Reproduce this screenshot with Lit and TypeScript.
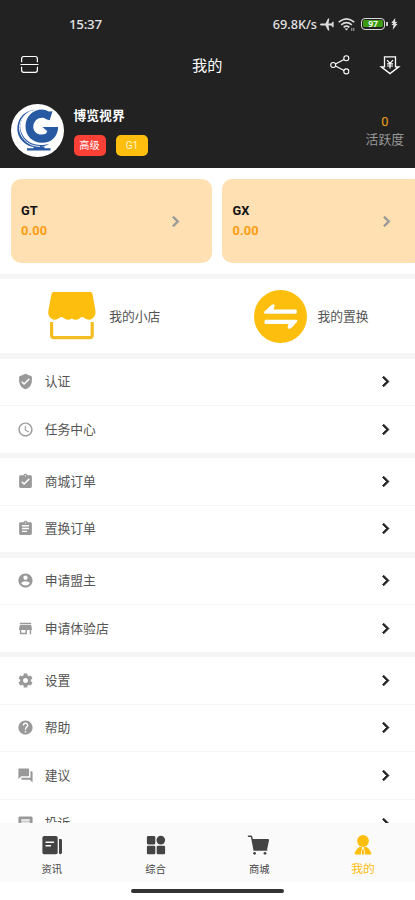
import { LitElement, html, svg, css } from "lit";
import { customElement, property } from "lit/decorators.js";

const materialPaths: Record<string, string> = {
  verified: "M12 1L3 5v6c0 5.55 3.84 10.74 9 12 5.16-1.26 9-6.45 9-12V5l-9-4zm-2 16l-4-4 1.41-1.41L10 14.17l6.59-6.59L18 9l-8 8z",
  clock: "M11.99 2C6.47 2 2 6.48 2 12s4.47 10 9.99 10C17.52 22 22 17.52 22 12S17.52 2 11.99 2zM12 20c-4.42 0-8-3.58-8-8s3.58-8 8-8 8 3.58 8 8-3.58 8-8 8zM12.5 7H11v6l5.25 3.15.75-1.23-4.5-2.67z",
  done: "M19 3h-4.18C14.4 1.84 13.3 1 12 1c-1.3 0-2.4.84-2.82 2H5c-1.1 0-2 .9-2 2v14c0 1.1.9 2 2 2h14c1.1 0 2-.9 2-2V5c0-1.1-.9-2-2-2zm-7 0c.55 0 1 .45 1 1s-.45 1-1 1-1-.45-1-1 .45-1 1-1zm-2 14l-4-4 1.41-1.41L10 14.17l6.59-6.59L18 9l-8 8z",
  order: "M19 3h-4.18C14.4 1.84 13.3 1 12 1c-1.3 0-2.4.84-2.82 2H5c-1.1 0-2 .9-2 2v14c0 1.1.9 2 2 2h14c1.1 0 2-.9 2-2V5c0-1.1-.9-2-2-2zm-7 0c.55 0 1 .45 1 1s-.45 1-1 1-1-.45-1-1 .45-1 1-1zm2 14H7v-2h7v2zm3-4H7v-2h10v2zm0-4H7V7h10v2z",
  account: "M12 2C6.48 2 2 6.48 2 12s4.48 10 10 10 10-4.48 10-10S17.52 2 12 2zm0 3c1.66 0 3 1.34 3 3s-1.34 3-3 3-3-1.34-3-3 1.34-3 3-3zm0 14.2c-2.5 0-4.71-1.28-6-3.22.03-1.99 4-3.08 6-3.08 1.99 0 5.97 1.09 6 3.08-1.29 1.94-3.5 3.22-6 3.22z",
  store: "M20 4H4v2h16V4zm1 10v-2l-1-5H4l-1 5v2h1v6h10v-6h4v6h2v-6h1zm-9 4H6v-4h6v4z",
  settings: "M19.43 12.98c.04-.32.07-.64.07-.98s-.03-.66-.07-.98l2.11-1.65c.19-.15.24-.42.12-.64l-2-3.46c-.12-.22-.39-.3-.61-.22l-2.49 1c-.52-.4-1.08-.73-1.69-.98l-.38-2.65C14.46 2.18 14.25 2 14 2h-4c-.25 0-.46.18-.49.42l-.38 2.65c-.61.25-1.17.59-1.69.98l-2.49-1c-.23-.09-.49 0-.61.22l-2 3.46c-.13.22-.07.49.12.64l2.11 1.65c-.04.32-.07.65-.07.98s.03.66.07.98l-2.11 1.65c-.19.15-.24.42-.12.64l2 3.46c.12.22.39.3.61.22l2.49-1c.52.4 1.08.73 1.69.98l.38 2.65c.03.24.24.42.49.42h4c.25 0 .46-.18.49-.42l.38-2.65c.61-.25 1.17-.59 1.69-.98l2.49 1c.23.09.49 0 .61-.22l2-3.46c.12-.22.07-.49-.12-.64l-2.11-1.65zM12 15.5c-1.93 0-3.5-1.57-3.5-3.5s1.57-3.5 3.5-3.5 3.5 1.57 3.5 3.5-1.57 3.5-3.5 3.5z",
  help: "M12 2C6.48 2 2 6.48 2 12s4.48 10 10 10 10-4.48 10-10S17.52 2 12 2zm1 17h-2v-2h2v2zm2.07-7.75l-.9.92C13.45 12.9 13 13.5 13 15h-2v-.5c0-1.1.45-2.1 1.17-2.83l1.24-1.26c.37-.36.59-.86.59-1.41 0-1.1-.9-2-2-2s-2 .9-2 2H8c0-2.21 1.79-4 4-4s4 1.79 4 4c0 .88-.36 1.68-.93 2.25z",
  forum: "M21 6h-2v9H6v2c0 .55.45 1 1 1h11l4 4V7c0-.55-.45-1-1-1zm-4 6V3c0-.55-.45-1-1-1H3c-.55 0-1 .45-1 1v14l4-4h10c.55 0 1-.45 1-1z",
  message: "M20 2H4c-1.1 0-1.99.9-1.99 2L2 22l4-4h14c1.1 0 2-.9 2-2V4c0-1.1-.9-2-2-2zm-2 12H6v-2h12v2zm0-3H6V9h12v2zm0-3H6V6h12v2z",
  chevron: "M10 6L8.59 7.41 13.17 12l-4.58 4.59L10 18l6-6z",
};

@customElement("line-icon")
class LineIcon extends LitElement {
  static styles = css`
    :host { display: block; width: 17px; height: 17px; flex: none; }
    svg { display: block; width: 100%; height: 100%; fill: currentColor; stroke: currentColor; stroke-width: 0; }
    .bold { stroke-width: 0.9; }
  `;
  @property() name = "chevron";
  render() {
    return html`<svg class=${this.name === "chevron" ? "bold" : ""} viewBox="0 0 24 24">${svg`<path d=${materialPaths[this.name]}></path>`}</svg>`;
  }
}

@customElement("menu-row")
class MenuRow extends LitElement {
  static styles = css`
    :host { display: flex; align-items: center; height: 46.6px; padding: 0 19px 0 17px; background: #fff; }
    line-icon { color: #999; }
    .label { flex: 1; margin-left: 10.7px; padding-top: 1px; font-size: 12.8px; line-height: 18px; color: #555; }
    .arrow { width: 21px; height: 21px; color: #222; }
  `;
  @property() icon = "";
  @property() label = "";
  render() {
    return html`<line-icon name=${this.icon}></line-icon><span class="label">${this.label}</span><line-icon class="arrow"></line-icon>`;
  }
}

const groups = [
  [["verified", "认证"], ["clock", "任务中心"]],
  [["done", "商城订单"], ["order", "置换订单"]],
  [["account", "申请盟主"], ["store", "申请体验店"]],
  [["settings", "设置"], ["help", "帮助"], ["forum", "建议"], ["message", "投诉"]],
];

const tabs = [
  {
    label: "资讯",
    icon: svg`<rect x="0.4" y="1" width="15.3" height="18.3" rx="1.8"></rect><path d="M17 4h1.6a1.4 1.4 0 0 1 1.4 1.4v12.2a1.7 1.7 0 0 1-3 1z"></path><path d="M4 7.2h7.5M4 10.8h4.5" fill="none" stroke="#fafafa" stroke-width="1.4" stroke-linecap="round"></path>`,
  },
  {
    label: "综合",
    icon: svg`<rect x="0.9" y="1" width="8.4" height="8.4" rx="1.3"></rect><circle cx="14.8" cy="5.1" r="4.3"></circle><rect x="0.9" y="10.8" width="8.4" height="8.4" rx="1.3"></rect><rect x="10.7" y="10.8" width="8.4" height="8.4" rx="1.3"></rect>`,
  },
  {
    label: "商城",
    icon: svg`<path d="M-.5 1.3h2.2q.8 0 1 .9L5.2 15h12.6" fill="none" stroke="currentColor" stroke-width="1.5" stroke-linecap="round"></path><path d="M3 4.1h16q1.2 0 1 1.2l-1.7 8.2q-.3 1.6-1.8 1.6H5.3z"></path><circle cx="5.6" cy="18.3" r="1.4"></circle><circle cx="16" cy="18.3" r="1.4"></circle>`,
  },
  {
    label: "我的",
    active: true,
    icon: svg`<circle cx="10" cy="6" r="5.9"></circle><path d="M6.4 12.1h2.8L7.8 19.5H3q-1.9 0-1.3-1.8 1.2-3.6 4.7-5.6zM13.6 12.1h-2.8l1.4 7.4H17q1.9 0 1.3-1.8-1.2-3.6-4.7-5.6zM9.4 14.2h1.2l.7 5.3H8.7z"></path>`,
  },
];

@customElement("app-root")
class AppRoot extends LitElement {
  static styles = css`
    :host { display: flex; flex-direction: column; width: 415px; height: 900px; overflow: hidden; background: #fff;
      font-family: Roboto, "Noto Sans CJK SC", sans-serif; color: #555; }
    * { box-sizing: border-box; }
    svg { display: block; flex: none; overflow: visible; }
    .head { flex: none; height: 168px; background: #222; color: #fff; display: flex; flex-direction: column; }
    .status { height: 44px; padding: 4px 17px 0 69px; display: flex; align-items: center; color: #e4e4e4; }
    .time { flex: 1; font: 500 13.4px/18px "Noto Sans", sans-serif; letter-spacing: -0.3px; }
    .speed { font: 500 12.7px/18px "Noto Sans", sans-serif; margin-right: 3px; }
    .plane { margin-right: 5px; }
    .wifi { margin-right: 6px; }
    .battery { width: 24px; height: 12px; border: 1.5px solid #d8d8d8; border-radius: 4px; padding: 1px; }
    .charge { display: block; height: 7px; background: #3c9a12; border-radius: 1.5px; color: #fff; text-align: center;
      font: 600 8.5px/7px "Noto Sans", sans-serif; }
    .nub { width: 1.5px; height: 4px; background: #ccc; margin: 0 3.5px 0 1px; }
    .nav { flex: none; height: 42px; display: grid; grid-template-columns: 1fr auto 1fr; align-items: center; padding: 0 15.5px 0 20px; }
    .title { font-size: 15.2px; line-height: 22px; margin-left: -5px; padding-top: 1px; }
    .actions { display: flex; justify-content: flex-end; align-items: center; gap: 30px; }
    .profile { flex: none; height: 82px; padding: 7px 11px 0 10.5px; display: flex; align-items: center; }
    .who { margin-left: 10px; flex: 1; padding-top: 1px; }
    .name { font-size: 12.8px; font-weight: 700; line-height: 18px; }
    .badges { display: flex; gap: 10.5px; margin-top: 10px; }
    .badge { width: 32px; height: 21px; border-radius: 5px; background: #fb4036; text-align: center; font-size: 10.2px; line-height: 22px; }
    .gold { background: #fdbe0d; color: #fff3cc; }
    .activity { text-align: center; font-size: 12.8px; line-height: 18px; color: #999; }
    .zero { color: #f2a01c; }
    .cards { flex: none; height: 106px; padding: 11px 0 11px 10.5px; display: flex; gap: 10.5px; overflow: hidden; }
    .card { flex: none; width: 201px; height: 84px; border-radius: 10px; background: #ffe0b2; padding: 0 26px 0 10.5px;
      display: flex; align-items: center; justify-content: space-between; font-weight: 700; font-size: 12.8px; line-height: 20px; color: #111; }
    .card line-icon { width: 21px; height: 21px; color: #999; }
    .amount { color: #fb9d12; letter-spacing: 0.1px; }
    .gap { flex: none; height: 5.3px; background: #f5f5f5; }
    .shops { flex: none; height: 74px; display: grid; grid-template-columns: 1fr 1fr; font-size: 12.8px; line-height: 18px; }
    .shop { display: flex; align-items: center; justify-content: center; gap: 10.5px; }
    .shop span { padding-top: 1px; }
    .wide { gap: 12px; }
    .list { flex: 1; min-height: 0; overflow: hidden; }
    .group { display: grid; gap: 1px; background: #f5f5f5; margin-bottom: 5.3px; }
    .menu { background: #f5f5f5; }
    .tabs { flex: none; height: 59px; background: #fafafa; display: grid; grid-template-columns: repeat(4, 1fr); }
    .tab { display: flex; flex-direction: column; align-items: center; padding-top: 12px; font-size: 10.3px; line-height: 16px; color: #444; gap: 7px; }
    .tab svg { fill: currentColor; }
    .active { color: #fdbe0d; font-size: 11.8px; gap: 6px; }
    .home { flex: none; height: 18px; display: flex; justify-content: center; padding-top: 7px; }
    .bar { width: 153px; height: 4px; border-radius: 2px; background: #333; }
  `;
  render() {
    return html`
      <div class="head">
        <div class="status">
          <span class="time">15:37</span><span class="speed">69.8K/s</span>
          <svg class="plane" width="14" height="13" viewBox="0 0 14 13"><path d="M0 6.5q0-.9 1.5-.9h4L8 .4h1.3l-.8 5.2h2.8l1.3-1.9h1V9.300h-1l-1.3-1.9H8.500l.8 5.200H8L5.500 7.400h-4Q0 7.400 0 6.500z" fill="#ddd"></path></svg>
          <svg class="wifi" width="16" height="13" viewBox="0 0 16 13"><g fill="none" stroke="#ddd" stroke-width="1.600"><path d="M-.3 4.200q7.800-6.600 15.600 0M2.200 6.900q5.300-4.500 10.600 0M4.600 9.400q2.900-2.400 5.800 0"></path></g><path d="M5.600 10.500h3.800L7.500 12.600z" fill="#ddd"></path><path d="M12.800 9.800v3.200M14.800 9.800v3.200" stroke="#aaa" stroke-width="1"></path></svg>
          <div class="battery"><span class="charge">97</span></div><span class="nub"></span>
          <svg width="7" height="12" viewBox="0 0 7 12"><path d="M4.200 0L.3 5h2L.5 7h2l-.8 4.800L6.500 6H4.600L6.300 4H4.200z" fill="#ddd"></path></svg>
        </div>
        <div class="nav">
          <svg width="19" height="18" viewBox="0 0 19 18" fill="none" stroke="#fff" stroke-width="1.200"><path d="M1.600 6.200V3Q1.600.5 3.700.5h11.600q2.100 0 2.100 2.500v3.200M1.600 10.800v3.300q0 2.300 2.100 2.300h11.600q2.100 0 2.100-2.300v-3.300M.5 8.500h18"></path></svg>
          <span class="title">我的</span>
          <div class="actions">
            <svg width="20" height="20" viewBox="0 0 20 20" fill="none" stroke="#fff" stroke-width="1.100"><circle cx="3.200" cy="10" r="2.500"></circle><circle cx="16.300" cy="3.200" r="2.500"></circle><circle cx="16.300" cy="16.400" r="2.500"></circle><path d="M5.500 8.900L14 4.400M5.500 11.100l8.500 4.300"></path></svg>
            <svg width="20" height="19" viewBox="0 0 20 19" fill="none" stroke="#fff" stroke-width="1.300"><path d="M4.500 10.800V.9h11v9.900h3.300L10 17.600 1.200 10.800z"></path><path d="M7.100 4.100L10 7.300l3-3.200M10 7.300v5.200M7 7.800h6M7 10h6" stroke-width="1.200"></path></svg>
          </div>
        </div>
        <div class="profile">
          <svg width="53" height="53" viewBox="0 0 53 53">
            <circle cx="26.5" cy="26.5" r="26.5" fill="#fff"></circle>
            <g fill="#2859a3">
              <path d="M41.500 7.300L38.700 16.200 35.200 15.200C30 11.500 23 15.500 22.300 22 21.800 28.500 28 32.300 34.800 29.800L36.300 27.300 31.500 22.900H47.200C46.800 32.500 40.500 38.800 31 38.800 21.500 38.800 14.500 32 14.500 22.300 14.500 12.500 21.800 5.500 31 5.500Q34.500 5.500 37.800 7.600z"></path>
              <path d="M24 5.600C11 9.500 6.500 20 10.800 29.600 15 39 26 43.600 38.500 39.700 26 47.200 12 42 7.600 31.500 3.500 19 10.500 7.200 24 5.600z"></path>
              <path d="M16 44.200h23.500v2.200H16zM22.500 42.800h11v1.600h-11z"></path>
            </g>
            <path d="M20.500 6.500C9.500 12 6.300 21.500 9.800 30.300 13.200 38.300 21 42.500 29 42.400" fill="none" stroke="#fff" stroke-width="0.900"></path>
          </svg>
          <div class="who"><div class="name">博览视界</div><div class="badges"><span class="badge">高级</span><span class="badge gold">G1</span></div></div>
          <div class="activity"><div class="zero">0</div><div>活跃度</div></div>
        </div>
      </div>
      <div class="cards">
        ${["GT", "GX"].map((n) => html`<div class="card"><div><div>${n}</div><div class="amount">0.00</div></div><line-icon></line-icon></div>`)}
      </div>
      <div class="gap"></div>
      <div class="shops">
        <div class="shop wide">
          <svg width="50" height="50" viewBox="0 0 50 50"><path d="M7 1h36q2 0 2.500 2L48.400 19.500q.8 5.500-3 8-4 2.700-8-.6-2.200-1.800-4.400 0-4.200 3.500-8.200.5-4 3-8.100-.4-2.200-1.900-4.400 0-4.200 3.200-8 .5Q.5 25 1.400 19.500L4.500 3Q5 1 7 1z" fill="#fdbe0d"></path><path d="M4.600 31v13.300q0 2.300 2.500 2.300h35.600q2.500 0 2.500-2.300V31" fill="none" stroke="#f2be24" stroke-width="3.200"></path></svg>
          <span>我的小店</span>
        </div>
        <div class="shop">
          <svg width="53" height="53" viewBox="0 0 53 53"><circle cx="26.5" cy="26.500" r="26.500" fill="#fdbe0d"></circle><path d="M41.500 19.400q1.300 0 1.300 1.300v1.800q0 1.300-1.300 1.300H12q-3.300-.2-1.300-2.500l6.500-6q1.500-1.200 2.700-.9 1.300.5.600 2.200l-1 2.800zM11.800 34.100q-1.300 0-1.300-1.300V31q0-1.300 1.300-1.300h29.500q3.300.2 1.300 2.500l-5 5.500q-1.500 1.400-2.900 1-1.500-.4-1-2l.8-2.600z" fill="#fff"></path></svg>
          <span>我的置换</span>
        </div>
      </div>
      <div class="gap"></div>
      <div class="list"><div class="menu">
        ${groups.map((g) => html`<div class="group">${g.map(([icon, label]) => html`<menu-row icon=${icon} label=${label}></menu-row>`)}</div>`)}
      </div></div>
      <div class="tabs">
        ${tabs.map((t) => html`<div class="tab ${t.active ? "active" : ""}"><svg width="20" height="20" viewBox="0 0 20 20">${t.icon}</svg><span>${t.label}</span></div>`)}
      </div>
      <div class="home"><div class="bar"></div></div>
    `;
  }
}
